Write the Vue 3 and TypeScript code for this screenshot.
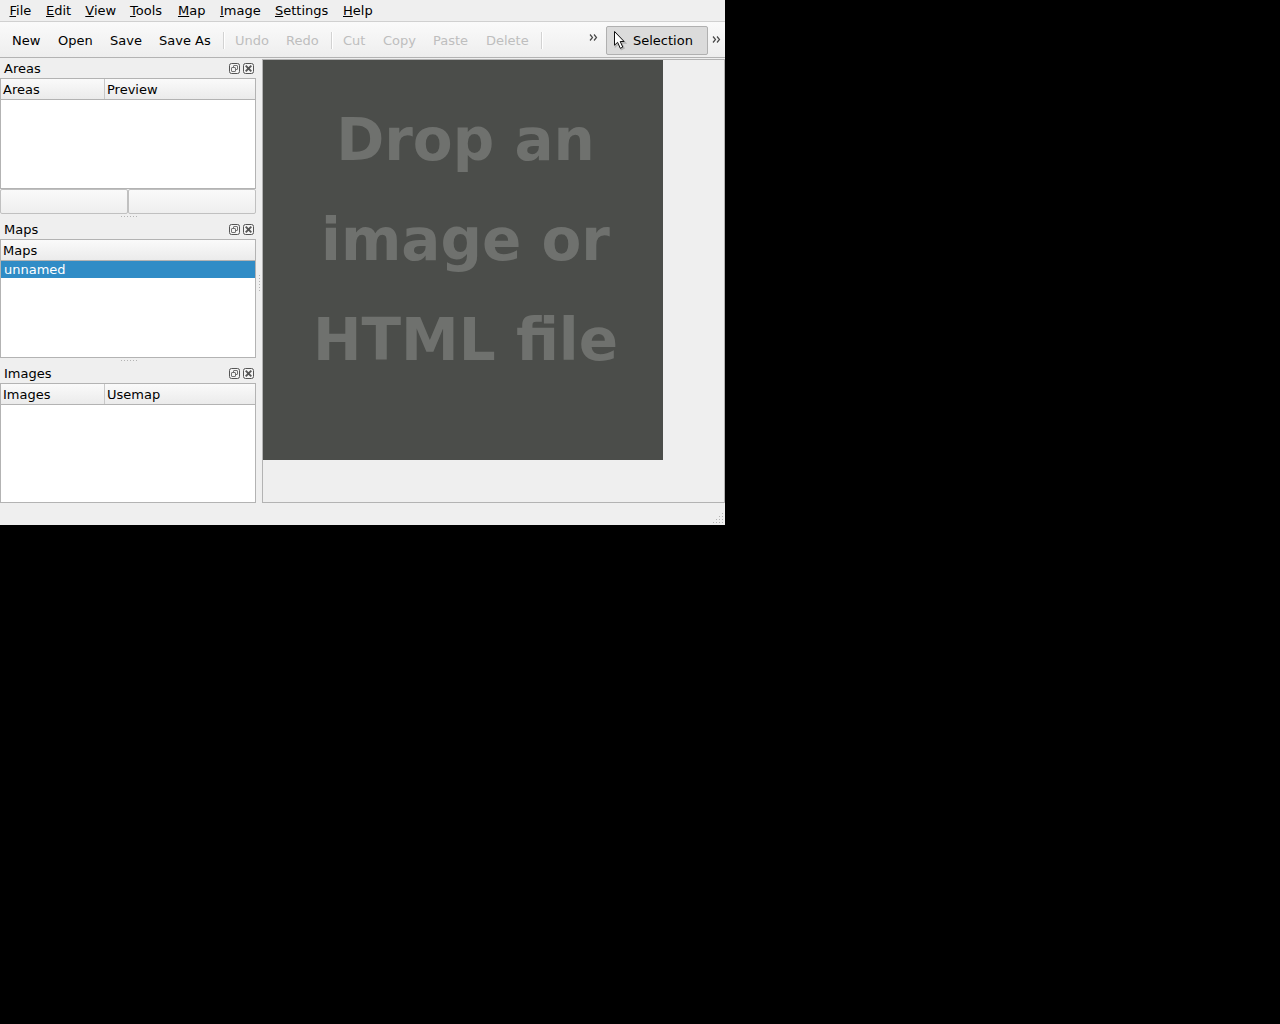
<script setup lang="ts">
interface MenuEntry { label: string; width: number }
interface ToolEntry { label?: string; width: number; disabled?: boolean }
interface Dock { title: string; columns: string[]; rows: string[]; tableHeight: number; buttons?: boolean }

const menus: MenuEntry[] = [
  { label: 'File', width: 36.5 },
  { label: 'Edit', width: 39.3 },
  { label: 'View', width: 44.7 },
  { label: 'Tools', width: 48 },
  { label: 'Map', width: 42 },
  { label: 'Image', width: 55 },
  { label: 'Settings', width: 68 },
  { label: 'Help', width: 40 },
]

// entries without a label are separators
const tools: ToolEntry[] = [
  { label: 'New', width: 46 },
  { label: 'Open', width: 52 },
  { label: 'Save', width: 49 },
  { label: 'Save As', width: 64 },
  { width: 12 },
  { label: 'Undo', width: 51, disabled: true },
  { label: 'Redo', width: 45, disabled: true },
  { width: 12 },
  { label: 'Cut', width: 40, disabled: true },
  { label: 'Copy', width: 50, disabled: true },
  { label: 'Paste', width: 53, disabled: true },
  { label: 'Delete', width: 55, disabled: true },
  { width: 12 },
]

const docks: Dock[] = [
  { title: 'Areas', columns: ['Areas', 'Preview'], rows: [], tableHeight: 111, buttons: true },
  { title: 'Maps', columns: ['Maps'], rows: ['unnamed'], tableHeight: 119 },
  { title: 'Images', columns: ['Images', 'Usemap'], rows: [], tableHeight: 120 },
]
</script>

<template>
  <div class="window">
    <nav class="menubar">
      <span v-for="m in menus" :key="m.label" class="menu" :style="{ width: m.width + 'px' }"><span class="key">{{ m.label[0] }}</span>{{ m.label.slice(1) }}</span>
    </nav>

    <div class="toolbar">
      <div class="actions">
        <template v-for="(t, i) in tools" :key="i">
          <span v-if="t.label" class="tool" :class="{ disabled: t.disabled }" :style="{ width: t.width + 'px' }">{{ t.label }}</span>
          <span v-else class="sep" :style="{ width: t.width + 'px' }"></span>
        </template>
      </div>
      <svg class="more first" width="9" height="7" viewBox="0 0 9 7"><path d="M1 .5 3.5 3.5 1 6.5M5 .5 7.5 3.5 5 6.5" /></svg>
      <button class="selection">
        <svg width="14" height="21" viewBox="0 0 14 21">
          <path class="shade" d="M2.5 2.5v14l3-3 2.8 6 2.7-1.4-2.5-5.1h4z" />
          <path class="arrow" d="M1.5 1.5v13.7l3.1-2.9 2.7 6 2.5-1.2-2.6-5.6h3.9z" />
        </svg>
        <span>Selection</span>
      </button>
      <svg class="more second" width="9" height="7" viewBox="0 0 9 7"><path d="M1 .5 3.5 3.5 1 6.5M5 .5 7.5 3.5 5 6.5" /></svg>
    </div>

    <div class="main">
      <aside class="docks">
        <template v-for="(d, i) in docks" :key="d.title">
          <section>
            <header class="title">
              <span class="caption">{{ d.title }}</span>
              <svg width="11" height="11" viewBox="0 0 11 11">
                <rect class="frame" x=".5" y=".5" width="10" height="10" rx="2" />
                <rect class="glyph" x="4.5" y="2.5" width="4" height="4" rx=".5" />
                <rect class="glyph" x="2.5" y="4.5" width="4" height="4" rx=".5" />
              </svg>
              <svg width="11" height="11" viewBox="0 0 11 11">
                <rect class="frame" x=".5" y=".5" width="10" height="10" rx="2" />
                <path class="cross" d="M2.7 2.7 8.3 8.3M8.3 2.7 2.7 8.3" />
              </svg>
            </header>
            <div class="table" :style="{ height: d.tableHeight + 'px' }">
              <div class="head">
                <span v-for="c in d.columns" :key="c">{{ c }}</span>
              </div>
              <div v-for="r in d.rows" :key="r" class="row">{{ r }}</div>
            </div>
            <div v-if="d.buttons" class="buttons"><button></button><button></button></div>
          </section>
          <div v-if="i < docks.length - 1" class="splitter">
            <svg width="18" height="3" viewBox="0 0 18 3"><path class="dots" d="M1 1.5h17" /></svg>
          </div>
        </template>
      </aside>
      <div class="vsplitter">
        <svg width="3" height="18" viewBox="0 0 3 18"><path class="dots" d="M1.5 1v17" /></svg>
      </div>
      <div class="view">
        <div class="drop"><span>Drop an</span><span>image or</span><span>HTML file</span></div>
      </div>
    </div>
    <footer class="status">
      <svg width="10" height="10" viewBox="0 0 10 10"><path class="dots" d="M9 .5h1M6 3.5h4M3 6.5h7M0 9.5h10" /></svg>
    </footer>
  </div>
</template>

<style>
body {
  margin: 0;
  background: #000;
}
</style>

<style scoped>
* {
  box-sizing: border-box;
}
.window {
  width: 725px;
  height: 525px;
  display: flex;
  flex-direction: column;
  background: #efefef;
  color: #000;
  font: 13px/15px "DejaVu Sans", sans-serif;
  overflow: hidden;
}
.menubar {
  flex: none;
  display: flex;
  height: 22px;
  padding: 3px 0 0 9.5px;
  border-bottom: 1px solid #d0d0d0;
}
.menu {
  flex: none;
  white-space: nowrap;
}
.key {
  text-decoration: underline 1px;
  text-decoration-skip-ink: none;
  text-underline-offset: 1px;
}
.toolbar {
  flex: none;
  display: flex;
  align-items: center;
  height: 36px;
  border-bottom: 1px solid #b3b3b3;
  background: linear-gradient(#fafafa, #eee);
}
.actions {
  display: flex;
  width: 589px;
  padding: 1px 0 0 12px;
}
.tool {
  flex: none;
  height: 17px;
  padding-top: 1px;
  white-space: nowrap;
}
.disabled {
  color: #bebebe;
}
.sep {
  flex: none;
  height: 17px;
  border-left: 1px solid #d2d2d2;
  box-shadow: inset 1px 0 #fff;
}
.more {
  flex: none;
  fill: none;
  stroke: #484848;
  stroke-width: 1.2;
}
.first {
  margin: -4px 8px 0 0;
}
.second {
  margin: 0 0 0 4px;
}
.selection {
  flex: none;
  display: flex;
  align-items: center;
  gap: 6px;
  width: 102px;
  height: 29px;
  margin-top: 1px;
  padding: 0 0 0 6px;
  border: 1px solid #b0b0b0;
  border-radius: 2px;
  background: #dbdbdb;
  font: inherit;
  color: inherit;
}
.selection svg {
  flex: none;
}
.arrow {
  fill: #fff;
  stroke: #111;
}
.shade {
  fill: none;
  stroke: #b5b5b5;
  stroke-width: 1.5;
}
.main {
  flex: none;
  display: flex;
  height: 445px;
}
.docks {
  width: 256px;
}
.title {
  display: flex;
  align-items: center;
  gap: 3px;
  height: 20px;
  padding: 1px 2px 0 4px;
}
.caption {
  flex: 1;
}
.title svg {
  fill: none;
  stroke: #555;
}
.frame {
  fill: #f4f4f4;
}
.glyph {
  fill: #f4f4f4;
  stroke: #666;
  stroke-width: 0.9;
}
.cross {
  stroke-width: 1.9;
}
.table {
  border: 1px solid #b3b3b3;
  background: #fff;
}
.head {
  display: flex;
  height: 21px;
  border-bottom: 1px solid #b3b3b3;
  background: linear-gradient(#fafafa, #ebebeb);
}
.head span {
  flex: 1;
  padding: 3px 0 0 2px;
}
.head span:first-child:not(:last-child) {
  flex: none;
  width: 104px;
  border-right: 1px solid #c8c8c8;
}
.row {
  height: 17px;
  padding: 1px 0 0 3px;
  background: #308cc6;
  color: #fff;
}
.buttons {
  display: flex;
  height: 25px;
}
.buttons button {
  flex: 1;
  padding: 0;
  border: 1px solid #c0c0c0;
  border-radius: 2px;
  background: linear-gradient(#fafafa, #eee);
}
.dots {
  fill: none;
  stroke: #b4b4b4;
  stroke-width: 1;
  stroke-dasharray: 1 2;
}
.splitter {
  display: flex;
  justify-content: center;
  height: 5px;
  padding: 1px 0 0 2px;
}
.vsplitter {
  display: flex;
  align-items: center;
  width: 6px;
  padding: 5px 0 0 2px;
}
.view {
  width: 463px;
  height: 444px;
  margin-top: 1px;
  border: 1px solid #b3b3b3;
}
.drop {
  display: flex;
  flex-direction: column;
  align-items: center;
  width: 400px;
  height: 400px;
  padding: 30px 0 0 5px;
  background: #4b4d4a;
  color: #6f716e;
  font-size: 58px;
  font-weight: bold;
  line-height: 100px;
  white-space: nowrap;
}
.status {
  display: flex;
  justify-content: flex-end;
  align-items: flex-end;
  flex: 1;
  padding: 0 2px 2px 0;
}
</style>
